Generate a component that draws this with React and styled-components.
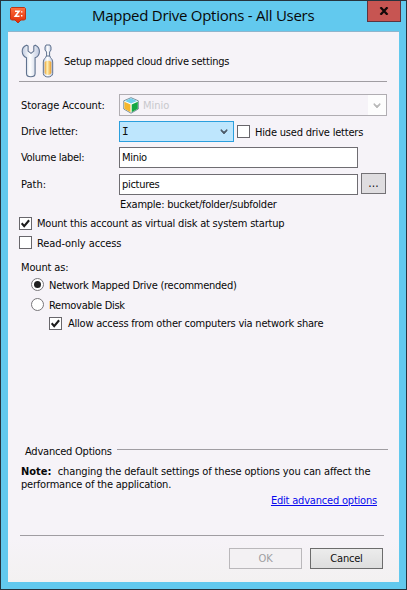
import React from "react";
import styled, { createGlobalStyle } from "styled-components";

const GlobalStyle = createGlobalStyle`
  * { box-sizing: border-box; }
  html, body { margin: 0; padding: 0; overflow: hidden; }
  body {
    font-family: "DejaVu Sans Condensed", "DejaVu Sans", sans-serif;
    font-stretch: condensed;
    font-size: 11px;
    line-height: 13px;
    color: #080808;
  }
`;

const Window = styled.div`
  width: 407px;
  height: 590px;
  background: #62c9ee;
  border: 1px solid #26333d;
  padding: 0 7px 7px 7px;
  display: flex;
  flex-direction: column;
`;

const TitleBar = styled.header`
  height: 30px;
  flex: none;
  display: flex;
  align-items: flex-start;
`;

const AppLogo = styled.svg`
  width: 18px;
  height: 18px;
  margin: 5px 0 0 1px;
  flex: none;
`;

const Title = styled.h1`
  margin: 4px 0 0;
  padding-left: 65px;
  flex: 1;
  font: 400 15px/21px "Open Sans", "Noto Sans", sans-serif;
  letter-spacing: ${(p) => p.$spacing}px;
  white-space: nowrap;
`;

const CloseButton = styled.button`
  width: 34px;
  height: 21px;
  margin-right: -2px;
  padding: 0;
  flex: none;
  display: grid;
  place-items: center;
  background: #c75552;
  border: 1px solid #5b3440;
  border-top: 0;
`;

const Client = styled.main`
  flex: 1;
  background: linear-gradient(#f6f3f8 92%, #f3f1f1);
  border-top: 1px solid #8fb5cd;
  display: flex;
  flex-direction: column;
`;

const Text = styled.span`
  white-space: pre;
  letter-spacing: ${(p) => p.$spacing || 0}px;
`;

const Banner = styled.section`
  height: 50px;
  margin: 0 12px 0 11px;
  border-bottom: 1px solid #a09da2;
  display: flex;
  align-items: flex-start;
  padding: 11px 0 0 2px;
  gap: 10px;
  & > ${Text} { padding-top: 12px; }
`;

const ToolsIcon = styled.svg`
  width: 33px;
  height: 36px;
  flex: none;
`;

const Form = styled.section`
  padding: 12px 11px 0 13px;
  display: grid;
  grid-template-rows: 22px 21px 21px 22px;
  row-gap: 5px;
`;

const Field = styled.div`
  display: grid;
  grid-template-columns: 98px 1fr;
  align-items: center;
`;

const Controls = styled.div`
  display: flex;
  align-items: center;
  height: 100%;
`;

const Combo = styled.div`
  width: ${(p) => p.$width}px;
  height: 100%;
  border: 1px solid ${(p) => (p.$disabled ? "#b0adb2" : "#2b9fdd")};
  background: ${(p) => (p.$disabled ? "#f6f3f8" : "#bee6fd")};
  color: ${(p) => (p.$disabled ? "#c8c8cc" : "#101010")};
  display: flex;
  align-items: center;
  padding-left: 3px;
  gap: 3px;
`;

const DriveLetter = styled.span`
  font-family: "DejaVu Sans Mono", monospace;
  margin-left: -1px;
`;

const Arrow = styled.span`
  width: 18px;
  height: 100%;
  margin-left: auto;
  display: grid;
  place-items: center;
  color: ${(p) => (p.$disabled ? "#b8b8b8" : "#4c5b68")};
  background: ${(p) => (p.$disabled ? "#fdfdfd" : "transparent")};
`;

const Input = styled.div`
  width: 239px;
  height: 21px;
  border: 1px solid #6f6d72;
  background: #fff;
  padding: 3px 2px;
`;

const Browse = styled.button`
  width: 25px;
  height: 21px;
  margin: -2px 0 0 3px;
  padding: 0;
  font: inherit;
  font-size: 12px;
  color: #101010;
  background: #dfdde0;
  border: 1px solid #747276;
`;

const Box = styled.span`
  width: 13px;
  height: 13px;
  flex: none;
  border: 1px solid #68666b;
  background: #fff;
  display: grid;
  place-items: center;
`;

const Radio = styled(Box)`
  border-radius: 50%;
  border-color: #777579;
`;

const Dot = styled.span`
  width: 7px;
  height: 7px;
  border-radius: 50%;
  background: #202020;
`;

const Example = styled.div`
  padding: 3px 0 0 112px;
  height: 20px;
`;

const Choice = styled.label`
  display: flex;
  align-items: center;
  gap: ${(p) => p.$gap || 5}px;
  height: ${(p) => p.$height || 20}px;
  padding-left: ${(p) => p.$indent || 0}px;
`;

const LowText = styled(Text)`
  padding-top: 2px;
`;

const InlineChoice = styled(Choice)`
  height: auto;
  padding-left: 3px;
`;

const Caption = styled.div`
  padding: 9px 0 0 13px;
  height: 22px;
`;

const Group = styled.div`
  margin: 107px 11px 0 17px;
  display: flex;
  align-items: flex-start;
  gap: 5px;
  height: 25px;
  padding-top: 5px;
`;

const GroupLine = styled.span`
  flex: 1;
  height: 1px;
  margin-top: 4px;
  background: #a09da2;
`;

const Note = styled.p`
  margin: 0;
  padding-left: 13px;
  display: flex;
  flex-direction: column;
`;

const NoteLine = styled.span`
  white-space: pre;
  height: 13px;
`;

const LinkRow = styled.div`
  display: flex;
  justify-content: flex-end;
  padding: 3px 22px 0 0;
`;

const Link = styled.a`
  color: #0808ee;
  text-decoration: underline;
  text-underline-offset: 1px;
  white-space: nowrap;
  letter-spacing: ${(p) => p.$spacing}px;
`;

const Footer = styled.footer`
  margin: auto 15px 0 12px;
  height: 47px;
  border-top: 1px solid #a09da2;
  padding: 12px 1px 0 0;
  display: flex;
  justify-content: flex-end;
  gap: 8px;
`;

const Button = styled.button`
  width: 73px;
  height: 21px;
  padding: 0;
  font: inherit;
  letter-spacing: -0.2px;
  color: ${(p) => (p.disabled ? "#a09ea2" : "#101010")};
  background: ${(p) => (p.disabled ? "#f3f1f3" : "linear-gradient(#ececec, #dedede)")};
  border: 1px solid ${(p) => (p.disabled ? "#bab8bb" : "#6c6c6c")};
`;

const Chevron = () => (
  <svg width="8" height="7" viewBox="0 0 8 7">
    <path d="M1 1.5v1.3L4 6l3-3.2V1.5L4 4z" fill="currentColor" stroke="currentColor" strokeWidth=".8" />
  </svg>
);

const Tick = () => (
  <svg width="11" height="11" viewBox="0 0 11 11">
    <path d="M1.7 5.3 4.2 8.1 9.1 2.3" fill="none" stroke="#1c1c1c" strokeWidth="2.1" />
  </svg>
);

const Cube = () => (
  <svg width="17" height="17" viewBox="0 0 17 17">
    <path d="M8 .7 15.3 3.8V12L8 16.2.8 12V3.8z" fill="#fff" stroke="#557482" strokeWidth=".8" />
    <path d="M8 1.3 14 3.9 8 6.6 2 3.9z" fill="#70d0ec" />
    <path d="M1.4 4.8 7.5 7.4v7.8L1.4 11.7z" fill="#f5b72d" />
    <path d="M8.7 7.4 14.8 4.8v6.9L8.7 15.2z" fill="#13a844" />
  </svg>
);

const Check = ({ checked }) => <Box>{checked && <Tick />}</Box>;

export default function App() {
  return (
    <>
      <GlobalStyle />
      <Window>
        <TitleBar>
          <AppLogo viewBox="0 0 18 18">
            <defs>
              <linearGradient id="logo" x2="0" y2="1">
                <stop stopColor="#ff7140" />
                <stop offset="1" stopColor="#df2905" />
              </linearGradient>
            </defs>
            <path d="M2.5 1.5h13L16.5 2.5v10.5L15.5 14H12l-3 3-3-3H2.5L1.5 13V2.5z" fill="url(#logo)" stroke="#bd3414" />
            <path d="M6 5.3h4L6.3 10.2h4.2" fill="none" stroke="#fff" strokeWidth="1.6" />
            <path d="M12 5.2h1.4v1.4H12zM12 9h1.4v1.4H12z" fill="#fff" />
          </AppLogo>
          <Title $spacing={-0.27}>Mapped Drive Options - All Users</Title>
          <CloseButton aria-label="Close">
            <svg width="10" height="8" viewBox="0 0 10 8">
              <path d="M1.5.2 8.5 7.8M8.5.2 1.5 7.8" stroke="#130909" strokeWidth="2.2" />
            </svg>
          </CloseButton>
        </TitleBar>
        <Client>
          <Banner>
            <ToolsIcon viewBox="0 0 33 36">
              <defs>
                <linearGradient id="steel">
                  <stop stopColor="#c1cbe0" />
                  <stop offset=".45" stopColor="#fff" />
                  <stop offset="1" stopColor="#bdc7de" />
                </linearGradient>
                <linearGradient id="handle">
                  <stop stopColor="#eda02b" />
                  <stop offset=".38" stopColor="#fff2b8" />
                  <stop offset="1" stopColor="#e99c28" />
                </linearGradient>
              </defs>
              <path d="M5.5 2.2C2.7 3.2 1.1 5.5 1.2 8.5c.2 3.2 2.2 5.4 4.3 6.3V30.5c0 4.4 8.6 4.4 8.6 0V14.8c2.4-1 4.2-3.2 4.3-6.1.1-3-1.5-5.4-4-6.5L12.8 3v5.1L10 10.4 7.1 8.1V3z" fill="url(#steel)" stroke="#60728f" strokeWidth="1.1" />
              <path d="M25 2h4l1 2v3l-1.4 2v5h-3V9L24 7V4z" fill="url(#steel)" stroke="#60728f" />
              <path d="M25.3 13h3.5c.2 2 2.9 2.6 2.9 6v11.5c0 4.6-9.4 4.6-9.4 0V19c0-3.4 2.8-4 3-6z" fill="url(#steel)" stroke="#60728f" />
              <path d="M23.7 19.5c0-2.4 6.6-2.4 6.6 0V29.5c0 3.3-6.6 3.3-6.6 0z" fill="url(#handle)" />
            </ToolsIcon>
            <Text $spacing={-0.25}>Setup mapped cloud drive settings</Text>
          </Banner>
          <Form>
            <Field>
              <Text $spacing={-0.08}>Storage Account:</Text>
              <Controls>
                <Combo $width={268} $disabled>
                  <Cube />
                  <Text>Minio</Text>
                  <Arrow $disabled><Chevron /></Arrow>
                </Combo>
              </Controls>
            </Field>
            <Field>
              <Text $spacing={-0.2}>Drive letter:</Text>
              <Controls>
                <Combo $width={115}>
                  <DriveLetter>I</DriveLetter>
                  <Arrow><Chevron /></Arrow>
                </Combo>
                <InlineChoice>
                  <Check />
                  <LowText $spacing={-0.2}>Hide used drive letters</LowText>
                </InlineChoice>
              </Controls>
            </Field>
            <Field>
              <Text $spacing={-0.3}>Volume label:</Text>
              <Controls><Input><Text $spacing={-0.3}>Minio</Text></Input></Controls>
            </Field>
            <Field>
              <Text>Path:</Text>
              <Controls>
                <Input><Text $spacing={-0.3}>pictures</Text></Input>
                <Browse>...</Browse>
              </Controls>
            </Field>
          </Form>
          <Example><Text $spacing={-0.25}>Example: bucket/folder/subfolder</Text></Example>
          <Choice $indent={11} $height={17}>
            <Check checked />
            <Text $spacing={-0.2}>Mount this account as virtual disk at system startup</Text>
          </Choice>
          <Choice $indent={11} $height={20}>
            <Check />
            <LowText $spacing={-0.1}>Read-only access</LowText>
          </Choice>
          <Caption><Text $spacing={-0.15}>Mount as:</Text></Caption>
          <Choice $indent={23}>
            <Radio><Dot /></Radio>
            <LowText $spacing={-0.25}>Network Mapped Drive (recommended)</LowText>
          </Choice>
          <Choice $indent={23}>
            <Radio />
            <LowText $spacing={-0.27}>Removable Disk</LowText>
          </Choice>
          <Choice $indent={41} $gap={6} $height={19}>
            <Check checked />
            <Text $spacing={-0.215}>Allow access from other computers via network share</Text>
          </Choice>
          <Group>
            <Text $spacing={-0.22}>Advanced Options</Text>
            <GroupLine />
          </Group>
          <Note>
            <NoteLine><b>Note:</b>  <Text $spacing={-0.14}>changing the default settings of these options you can affect the</Text></NoteLine>
            <NoteLine><Text $spacing={-0.2}>performance of the application.</Text></NoteLine>
          </Note>
          <LinkRow><Link $spacing={-0.2}>Edit advanced options</Link></LinkRow>
          <Footer>
            <Button disabled>OK</Button>
            <Button>Cancel</Button>
          </Footer>
        </Client>
      </Window>
    </>
  );
}
